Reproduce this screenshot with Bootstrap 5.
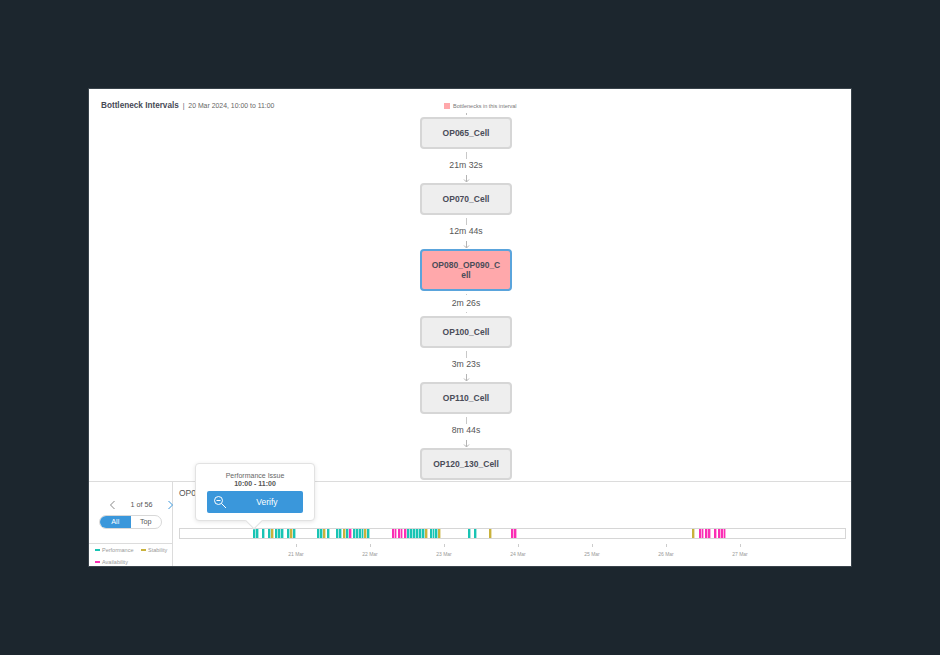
<!DOCTYPE html>
<html lang="en">

<head>
    <meta charset="UTF-8">
    <meta name="viewport" content="width=device-width, initial-scale=1.0">
    <title>Bottleneck Intervals</title>
    <link href="https://cdn.jsdelivr.net/npm/bootstrap@5.3.3/dist/css/bootstrap.min.css" rel="stylesheet">
    <script src="https://cdn.jsdelivr.net/npm/bootstrap@5.3.3/dist/js/bootstrap.bundle.min.js"></script>
    <style>
        html, body { height: 100%; }
        body { background: #1c262e; font-family: "Liberation Sans", Arial, sans-serif; color: #4a4d57; overflow: hidden; }
        .frame { width: 762px; height: 477px; margin: 89px 0 0 89px; background: #fff; position: relative; box-shadow: 0 0 0 1px #39434b; }
        .top-area { height: 392px; overflow: hidden; }
        .title-col { width: 331px; padding: 12px 0 0 12px; font-size: 7px; line-height: 10px; white-space: nowrap; }
        .title-col b { color: #474a56; font-size: 8.2px; }
        .title-col span { color: #666; font-size: 6.9px; }
        .flow-col { width: 92px; }
        .flow-legend { height: 24px; margin-left: 24px; padding-top: 13px; font-size: 5.5px; line-height: 8px; color: #777; white-space: nowrap; flex-shrink: 0; }
        .flow-legend i { display: inline-block; width: 6px; height: 6px; background: #ffa8ab; margin-right: 3px; vertical-align: -1px; }
        .flow-top { width: 1px; height: 4px; flex-shrink: 0; }
        .flow-top u { display: block; width: 1px; height: 2px; background: #bbb; }
        .node { width: 92px; height: 32px; padding: 0 9px 1px; border: 2px solid #d6d6d6; border-radius: 4px; background: #eee; font-size: 8.5px; line-height: 10px; font-weight: 700; color: #4a4c58; text-align: center; word-break: break-all; flex-shrink: 0; }
        .node-hot { height: 42px; padding-bottom: 0; background: #ffa8ab; border-color: #5aa4dc; }
        .link { height: 34px; width: 92px; font-size: 8.7px; line-height: 10px; color: #555; flex-shrink: 0; }
        .link-short { height: 25px; }
        .link u { display: block; width: 1px; height: 7px; background: #c8c8c8; margin-top: 3px; margin-bottom: 1px; }
        .link em { display: block; width: 7px; height: 8px; margin-top: 3px; }
        .link-short u { height: 1px; margin-top: 3px; margin-bottom: 3px; }
        .link-short u + span + u { margin-top: 4px; margin-bottom: 0; }
        .bottom-area { height: 85px; border-top: 1px solid #dcdcdc; }
        .left-col { width: 84px; border-right: 1px solid #dcdcdc; }
        .pager { height: 61px; padding-top: 15px; }
        .pager-row { width: 63px; height: 16px; margin-left: 20px; font-size: 7.2px; color: #555; }
        .pager-row svg { flex-shrink: 0; }
        .pager-next { margin-right: -2px; }
        .switcher { width: 63px; height: 14px; margin: 2px 0 0 10px; border: 1px solid #d8d8d8; border-radius: 7px; overflow: hidden; font-size: 7.2px; color: #555; }
        .switcher div { line-height: 12px; text-align: center; flex: 1 1 50%; }
        .switcher .on { background: #3a97db; color: #fff; }
        .legend-box { border-top: 1px solid #dcdcdc; height: 23px; padding: 0 0 0 6px; font-size: 5.5px; line-height: 12px; color: #999; white-space: nowrap; }
        .legend-box span { margin-right: 6px; }
        .legend-box i { display: inline-block; width: 5px; height: 2px; margin-right: 2px; vertical-align: 1px; }
        .chart-col { flex: 1; padding: 5px 0 0 6px; }
        .cell-name { font-size: 8.5px; line-height: 12px; color: #555; height: 41px; }
        .strip { width: 667px; height: 11px; border: 1px solid #d6d6d6; position: relative; }
        .strip i { position: absolute; top: 0; bottom: 0; border-right: 1px solid rgba(255, 255, 255, .6); }
        .tick-row { width: 667px; height: 20px; position: relative; }
        .tick-row div { position: absolute; top: 5px; width: 30px; margin-left: -15px; text-align: center; font-size: 5px; line-height: 7px; color: #999; }
        .tick-row div::before { content: ""; display: block; width: 1px; height: 3px; background: #ccc; margin: 0 auto 4px; }
        .pop { position: absolute; left: 106px; top: 374px; width: 120px; height: 58px; background: #fff; border: 1px solid #e2e2e2; border-radius: 4px; box-shadow: 0 1px 4px rgba(0,0,0,.1); padding-top: 8px; text-align: center; font-size: 7px; line-height: 8px; color: #666; }
        .pop b { display: block; color: #555; }
        .pop::after { content: ""; position: absolute; left: 52px; bottom: -7px; width: 12px; height: 12px; background: #fff; transform: rotate(45deg); border-right: 1px solid #e2e2e2; border-bottom: 1px solid #e2e2e2; }
        .verify { width: 96px; height: 22px; margin: 3px 0 0 11px; padding: 0; border: 0; border-radius: 2px; background: #3a97db; color: #fff; font-size: 8.5px; position: relative; z-index: 1; }
        .verify svg { margin-left: 6px; flex-shrink: 0; }
        .verify span { flex: 1; padding-left: 4px; }
    </style>
</head>

<body>
    <div class="frame">
        <div class="top-area d-flex">
            <div class="title-col">
                <b>Bottleneck Intervals</b> <span>&nbsp;|&nbsp; 20 Mar 2024, 10:00 to 11:00</span>
            </div>
            <div class="flow-col d-flex flex-column align-items-center" id="flow">
                <div class="flow-legend align-self-start"><i></i>Bottlenecks in this interval</div>
                <div class="flow-top"><u></u></div>
            </div>
        </div>
        <div class="bottom-area d-flex">
            <div class="left-col">
                <div class="pager">
                    <div class="pager-row d-flex align-items-center justify-content-between">
                        <svg width="8" height="10" viewBox="0 0 8 10" fill="none" stroke="#888" stroke-width="1"><path d="M5.5 1 1.5 5l4 4" /></svg>
                        <span>1 of 56</span>
                        <svg class="pager-next" width="8" height="10" viewBox="0 0 8 10" fill="none" stroke="#3a97db" stroke-width="1"><path d="M2.5 1l4 4-4 4" /></svg>
                    </div>
                    <div class="switcher d-flex">
                        <div class="on">All</div>
                        <div>Top</div>
                    </div>
                </div>
                <div class="legend-box">
                    <span><i style="background:#19c4b4"></i>Performance</span>
                    <span><i style="background:#c9b23c"></i>Stability</span><br>
                    <span><i style="background:#fb2fb4"></i>Availability</span>
                </div>
            </div>
            <div class="chart-col">
                <div class="cell-name">OP080</div>
                <div class="strip" id="strip"></div>
                <div class="tick-row" id="ticks"></div>
            </div>
        </div>
        <div class="pop">
            Performance Issue
            <b>10:00 - 11:00</b>
            <button class="verify d-flex align-items-center" type="button">
                <svg width="14" height="14" viewBox="0 0 14 14" fill="none" stroke="#fff" stroke-width="1"><circle cx="5.5" cy="5.5" r="4" /><path d="M8.5 8.5 13 13M3.5 5.5h4" /></svg>
                <span>Verify</span>
            </button>
        </div>
    </div>

    <script>
        const arrow = '<svg width="7" height="8" viewBox="0 0 7 8" fill="none" stroke="#b4b4b4"><path d="M3.5 0v7M1 4.5l2.5 2.5L6 4.5" /></svg>';
        const nodes = [
            { name: 'OP065_Cell', time: '21m 32s' },
            { name: 'OP070_Cell', time: '12m 44s' },
            { name: 'OP080_OP090_Cell', time: '2m 26s', hot: true },
            { name: 'OP100_Cell', time: '3m 23s' },
            { name: 'OP110_Cell', time: '8m 44s' },
            { name: 'OP120_130_Cell' }
        ];
        const flow = document.getElementById('flow');
        nodes.forEach(n => {
            const box = document.createElement('div');
            box.className = 'node d-flex align-items-center justify-content-center' + (n.hot ? ' node-hot' : '');
            box.textContent = n.name;
            flow.appendChild(box);
            if (n.time) {
                const link = document.createElement('div');
                link.className = 'link d-flex flex-column align-items-center' + (n.hot ? ' link-short' : '');
                link.innerHTML = n.hot
                    ? `<u></u><span>${n.time}</span><u></u>`
                    : `<u></u><span>${n.time}</span><em>${arrow}</em>`;
                flow.appendChild(link);
            }
        });

        // [start x, end x, type] in page pixels, strip starts at 179
        const t = '#19c4b4', y = '#c9b23c', p = '#fb2fb4';
        const bars = [
            [253,255,t],[256,258,t],[262,264,t],[268,270,t],[271,273,y],[275,277,t],[278,280,t],[281,283,t],
            [287,289,t],[290,292,y],[293,295,t],[317,319,t],[320,322,t],[323,325,y],[327,329,t],
            [336,338,t],[339,341,t],[343,345,y],[346,348,t],[349,351,p],[353,355,t],[356,358,t],[359,361,t],[362,363,t],[364,366,y],[367,369,t],
            [392,394,p],[395,396,p],[398,400,p],[401,402,p],[404,406,p],[407,409,t],[410,412,t],[413,415,t],[416,418,t],[419,421,t],[422,424,t],[425,427,y],
            [430,432,t],[433,434,t],[435,437,t],[438,440,y],[468,470,t],[474,476,t],[489,491,y],[511,513,p],[514,516,p],
            [692,694,y],[699,701,p],[702,703,p],[705,707,p],[708,710,p],[714,716,p],[718,720,p],[721,723,p],[724,725,p]
        ];
        const strip = document.getElementById('strip');
        bars.forEach(b => {
            const el = document.createElement('i');
            el.style.left = (b[0] - 180) + 'px';
            el.style.width = (b[1] - b[0] + 1) + 'px';
            el.style.backgroundColor = b[2];
            strip.appendChild(el);
        });

        const ticks = document.getElementById('ticks');
        ['21 Mar', '22 Mar', '23 Mar', '24 Mar', '25 Mar', '26 Mar', '27 Mar'].forEach((d, i) => {
            const el = document.createElement('div');
            el.style.left = (117 + i * 74) + 'px';
            el.textContent = d;
            ticks.appendChild(el);
        });
    </script>
</body>

</html>
